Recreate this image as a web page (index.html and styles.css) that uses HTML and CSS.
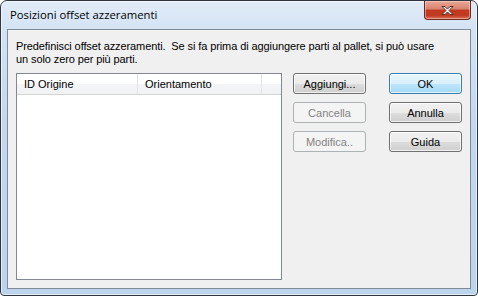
FILE: index.html
```html
<!DOCTYPE html>
<html lang="it">
<head>
    <meta charset="UTF-8">
    <title>Posizioni offset azzeramenti</title>
    <link rel="stylesheet" href="styles.css">
</head>
<body>
    <div class="window">
        <div class="titlebar">
            <span class="title">Posizioni offset azzeramenti</span>
            <div class="close">
                <svg width="15" height="11" viewBox="0 0 15 11">
                    <path d="M2 1.5h3l2.5 2.6 2.5-2.6h3l-4 4 4 4h-3l-2.5-2.6-2.5 2.6h-3l4-4z"
                          fill="#fff" stroke="#5a2a22" stroke-width="1" stroke-linejoin="round"/>
                </svg>
            </div>
        </div>
        <div class="client">
            <p class="intro">Predefinisci offset azzeramenti.&nbsp; Se si fa prima di aggiungere parti al pallet, si può usare<br>un solo zero per più parti.</p>
            <div class="main">
                <div class="list">
                    <div class="list-head">
                        <div class="col col-id">ID Origine</div>
                        <div class="col col-or">Orientamento</div>
                        <div class="col col-rest"></div>
                    </div>
                </div>
                <div class="buttons">
                    <button class="btn">Aggiungi...</button>
                    <button class="btn" disabled>Cancella</button>
                    <button class="btn" disabled>Modifica..</button>
                </div>
                <div class="buttons">
                    <button class="btn btn-default">OK</button>
                    <button class="btn">Annulla</button>
                    <button class="btn">Guida</button>
                </div>
            </div>
        </div>
    </div>
</body>
</html>
```

FILE: styles.css
```css
*{
    margin: 0;
    padding: 0;
    box-sizing: border-box;
}
html, body{
    width: 478px;
    height: 296px;
    background: #fff;
    overflow: hidden;
}
.window{
    width: 478px;
    height: 296px;
    border: 1px solid #2f3640;
    border-radius: 7px 7px 4px 4px;
    background: linear-gradient(to bottom, #e2ecf8 0px, #d3e3f4 28px, #c3d8ef 120px, #bcd3ec 296px);
    box-shadow: inset 0 0 0 1px rgba(255,255,255,0.6);
    padding: 0 6px 6px 6px;
    display: flex;
    flex-direction: column;
}
.titlebar{
    height: 28px;
    display: flex;
    align-items: flex-start;
}
.title{
    font-family: "Open Sans", "Noto Sans", sans-serif;
    font-size: 11.3px;
    color: #000;
    padding: 6px 0 0 3px;
    line-height: 16px;
}
.close{
    margin-left: auto;
    width: 47px;
    height: 19px;
    border: 1px solid #6b2a20;
    border-top: none;
    border-radius: 0 0 4px 4px;
    background: linear-gradient(to bottom, #e9a796 0%, #d9836f 45%, #c2381f 50%, #c13a22 80%, #d9735a 100%);
    box-shadow: inset 0 0 0 1px rgba(255,220,210,0.5);
    display: flex;
    align-items: center;
    justify-content: center;
}
.close svg{
    display: block;
}
.client{
    flex: 1;
    background: #f0f0f0;
    border: 1px solid #7f8b99;
    font-family: "Liberation Sans", Arial, sans-serif;
    font-size: 11px;
    color: #000;
    padding: 10px 8px 8px 8px;
}
.intro{
    line-height: 13px;
    height: 33px;
    letter-spacing: -0.1px;
}
.main{
    display: flex;
    align-items: flex-start;
}
.list{
    width: 266px;
    height: 207px;
    background: #fff;
    border: 1px solid #828790;
}
.list-head{
    display: flex;
    height: 21px;
    background: linear-gradient(to bottom, #ffffff 0%, #ffffff 50%, #f4f5f7 51%, #f1f2f4 100%);
    border-bottom: 1px solid #d5d5d5;
}
.col{
    line-height: 20px;
    border-right: 1px solid #e3e4e6;
    white-space: nowrap;
}
.col-id{
    width: 121px;
    padding-left: 7px;
}
.col-or{
    width: 124px;
    padding-left: 7px;
}
.col-rest{
    flex: 1;
    border-right: none;
}
.buttons{
    display: flex;
    flex-direction: column;
    gap: 8px;
    margin-left: 11px;
}
.buttons + .buttons{
    margin-left: 23px;
}
.btn{
    width: 73px;
    height: 21px;
    border: 1px solid #707070;
    border-radius: 3px;
    background: linear-gradient(to bottom, #f2f2f2 0%, #ebebeb 50%, #dddddd 51%, #cfcfcf 100%);
    box-shadow: inset 0 0 0 1px rgba(255,255,255,0.7);
    font-family: "Liberation Sans", Arial, sans-serif;
    font-size: 11px;
    color: #000;
}
.btn:disabled{
    border-color: #adb2b5;
    background: #f4f4f4;
    box-shadow: none;
    color: #838383;
}
.btn-default{
    border-color: #3c7fb1;
    background: linear-gradient(to bottom, #eaf6fd 0%, #d9f0fc 50%, #bee6fd 51%, #a7d9f5 100%);
    box-shadow: inset 0 0 0 1px rgba(255,255,255,0.6);
}
```
